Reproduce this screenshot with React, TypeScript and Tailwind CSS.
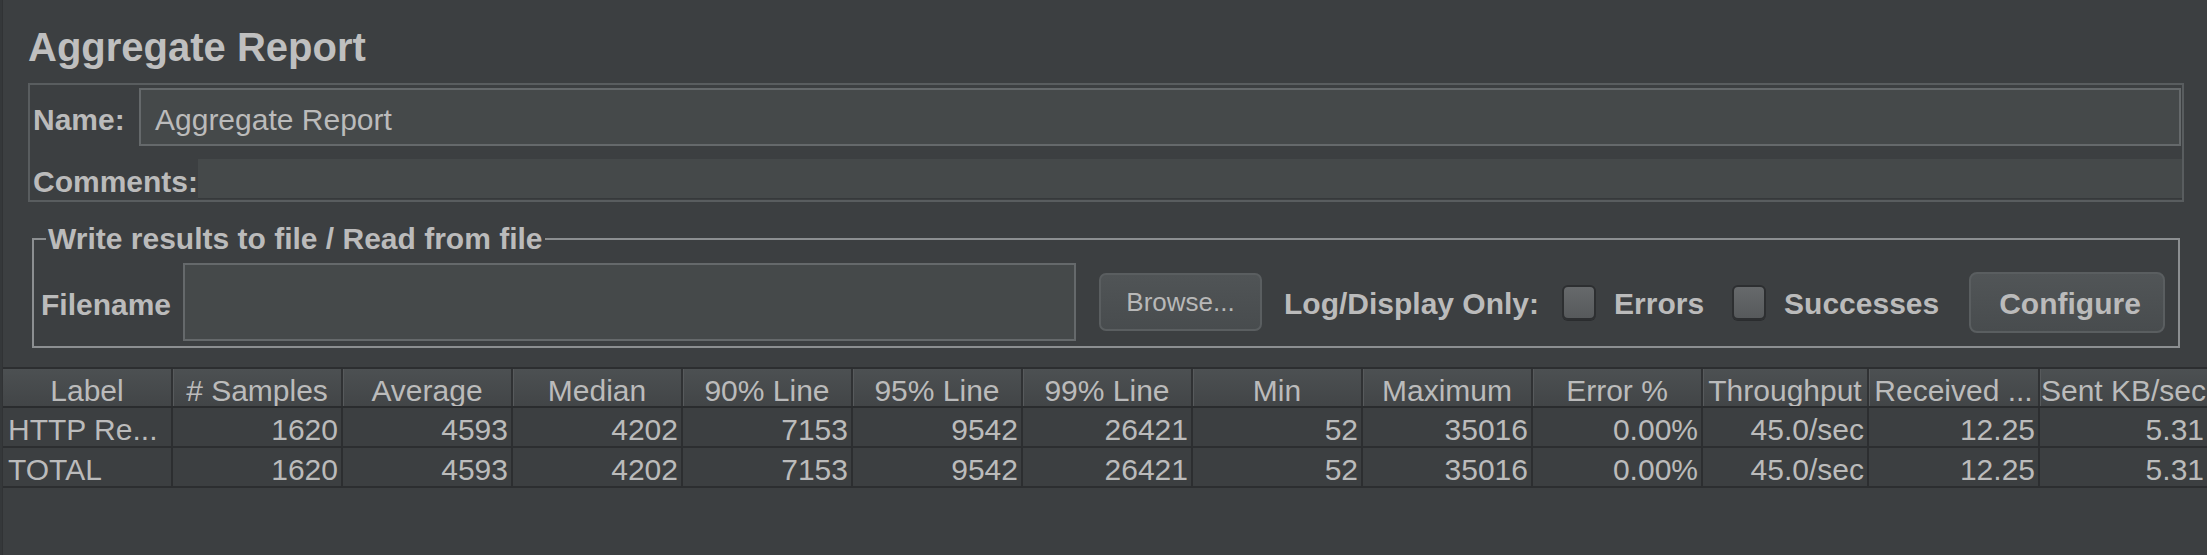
const columns = [
  "Label",
  "# Samples",
  "Average",
  "Median",
  "90% Line",
  "95% Line",
  "99% Line",
  "Min",
  "Maximum",
  "Error %",
  "Throughput",
  "Received ...",
  "Sent KB/sec",
];

const rows = [
  ["HTTP Re...", "1620", "4593", "4202", "7153", "9542", "26421", "52", "35016", "0.00%", "45.0/sec", "12.25", "5.31"],
  ["TOTAL", "1620", "4593", "4202", "7153", "9542", "26421", "52", "35016", "0.00%", "45.0/sec", "12.25", "5.31"],
];

function Checkbox() {
  return (
    <div className="w-[34px] h-[35px] shrink-0 rounded-[6px] border-2 border-[#2d2f31] bg-gradient-to-b from-[#66696b] to-[#575a5c] shadow-[0_1px_0_#2a2c2e]" />
  );
}

export default function App() {
  return (
    <div className="w-[2207px] h-[555px] overflow-hidden flex bg-[#3c3f41] text-[#bbbbbb] font-['Liberation_Sans',Arial,sans-serif]">
      {/* split pane edge */}
      <div className="w-[3px] h-full shrink-0 bg-[#35383a] border-r border-[#313335]" />

      <div className="flex-1 flex flex-col">
        {/* title */}
        <div className="pl-[25px] pt-[24px] text-[40px] leading-[47px] font-bold text-[#bfbfbf]">
          Aggregate Report
        </div>

        {/* name / comments panel */}
        <div className="mt-[12px] ml-[25px] w-[2156px] h-[119px] border-2 border-[#595d5f] flex flex-col">
          <div className="mt-[3px] h-[58px] flex items-start">
            <div className="w-[109px] shrink-0 pl-[3px] h-[58px] leading-[63px] text-[30px] font-bold">Name:</div>
            <div className="flex-1 mr-[1px] h-[58px] border-2 border-[#65696b] bg-[#45494a] pl-[14px] text-[30px] leading-[59px] whitespace-nowrap">
              Aggregate Report
            </div>
          </div>
          <div className="mt-[13px] h-[40px] flex items-start">
            <div className="shrink-0 pl-[3px] h-[40px] leading-[46px] text-[30px] font-bold">Comments:</div>
            <div className="flex-1 h-[40px] bg-[#45494a] border-b border-[#36393b]" />
          </div>
        </div>

        {/* write results fieldset */}
        <div className="relative mt-[36px] ml-[29px] w-[2148px] h-[110px] border-2 border-[#8c8f91]">
          <span className="absolute left-[12px] -top-[18px] px-[2px] bg-[#3c3f41] text-[30px] leading-[34px] font-bold whitespace-nowrap">
            Write results to file / Read from file
          </span>
          <div className="mt-[23px] h-[78px] flex items-center">
            <div className="w-[149px] shrink-0 pl-[7px] pt-[5px] text-[30px] font-bold leading-[36px]">Filename</div>
            <div className="w-[893px] h-[78px] shrink-0 border-2 border-[#65696b] bg-[#45494a]" />
            <div className="ml-[23px] w-[163px] h-[58px] shrink-0 rounded-[7px] border-2 border-[#5a5e60] bg-gradient-to-b from-[#505456] to-[#484c4e] flex items-center justify-center text-[26px] text-[#b8b8b8]">
              Browse...
            </div>
            <div className="ml-[22px] pt-[3px] text-[30px] font-bold leading-[36px] whitespace-nowrap">Log/Display Only:</div>
            <div className="ml-[23px]">
              <Checkbox />
            </div>
            <div className="ml-[18px] pt-[3px] text-[30px] font-bold leading-[36px]">Errors</div>
            <div className="ml-[28px]">
              <Checkbox />
            </div>
            <div className="ml-[18px] pt-[3px] text-[30px] font-bold leading-[36px]">Successes</div>
            <div className="ml-auto mr-[13px] w-[196px] h-[61px] shrink-0 rounded-[8px] border-2 border-[#5a5e60] bg-gradient-to-b from-[#515557] to-[#484c4e] flex items-center justify-center pl-[6px] pt-[2px] text-[30px] font-bold">
              Configure
            </div>
          </div>
        </div>

        {/* results table */}
        <div className="mt-[19px] border-t-2 border-[#2c2e30]">
          <div className="grid grid-cols-[repeat(10,170px)_166px_171px_1fr] h-[39px] border-b-2 border-[#2a2c2e] bg-gradient-to-b from-[#4c5052] to-[#424547]">
            {columns.map((c, i) => (
              <div
                key={c}
                className={
                  "h-[37px] text-center text-[30px] leading-[44px] whitespace-nowrap overflow-hidden " +
                  (i < columns.length - 1 ? "border-r-2 border-[#303234] shadow-[1px_0_0_#575a5c]" : "")
                }
              >
                {c}
              </div>
            ))}
          </div>
          {rows.map((r, ri) => (
            <div
              key={ri}
              className="grid grid-cols-[repeat(10,170px)_166px_171px_1fr] h-[40px] border-b-2 border-[#2c2e30] bg-[#3c3f41]"
            >
              {r.map((v, i) => (
                <div
                  key={i}
                  className={
                    "h-[38px] text-[30px] leading-[43px] whitespace-nowrap overflow-hidden " +
                    (i === 0 ? "text-left pl-[5px] " : "text-right pr-[3px] ") +
                    (i < r.length - 1 ? "border-r-2 border-[#2c2e30]" : "")
                  }
                >
                  {v}
                </div>
              ))}
            </div>
          ))}
        </div>
      </div>
    </div>
  );
}
